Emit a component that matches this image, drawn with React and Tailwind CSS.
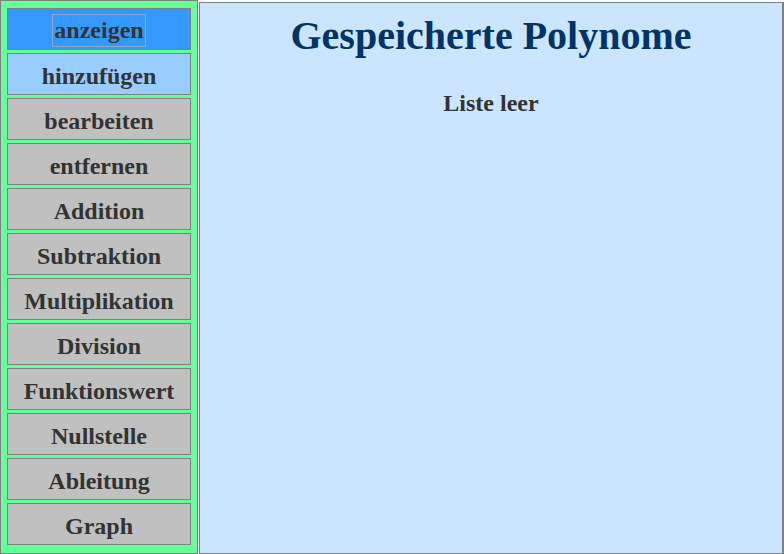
export default function App() {
  const items = [
    "anzeigen",
    "hinzufügen",
    "bearbeiten",
    "entfernen",
    "Addition",
    "Subtraktion",
    "Multiplikation",
    "Division",
    "Funktionswert",
    "Nullstelle",
    "Ableitung",
    "Graph",
  ];
  const serif = { fontFamily: '"Liberation Serif", "Times New Roman", serif' };
  return (
    <div className="w-[784px] h-[554px] flex bg-white" style={serif}>
      <div className="w-[198px] h-[554px] border border-[#808080] bg-[#66ff99] pl-[6px] pr-[6px] pt-[7px] flex flex-col gap-[3px]">
        {items.map((t, i) => {
          const bg = i === 0 ? "bg-[#3399ff]" : i === 1 ? "bg-[#99ccff]" : "bg-[#c0c0c0]";
          return (
            <div
              key={t}
              className={`h-[42px] w-[184px] border border-[#808080] ${bg} flex items-center justify-center text-[24px] leading-[28px] pt-[3px] font-bold text-[#333333]`}
            >
              {i === 0 ? (
                <span className="border border-[#8fa8c8] px-[1px] leading-[31px] -mt-[1px]">{t}</span>
              ) : (
                t
              )}
            </div>
          );
        })}
      </div>
      <div className="ml-[1px] mt-[2px] flex-1 h-[552px] border border-[#808080] border-r-2 bg-[#cce5ff] flex flex-col items-center">
        <h1 className="mt-[10px] text-[40px] font-bold text-[#003366] leading-[46px]">
          Gespeicherte Polynome
        </h1>
        <div className="mt-[30px] text-[24px] leading-[28px] font-bold text-[#333333]">Liste leer</div>
      </div>
    </div>
  );
}
